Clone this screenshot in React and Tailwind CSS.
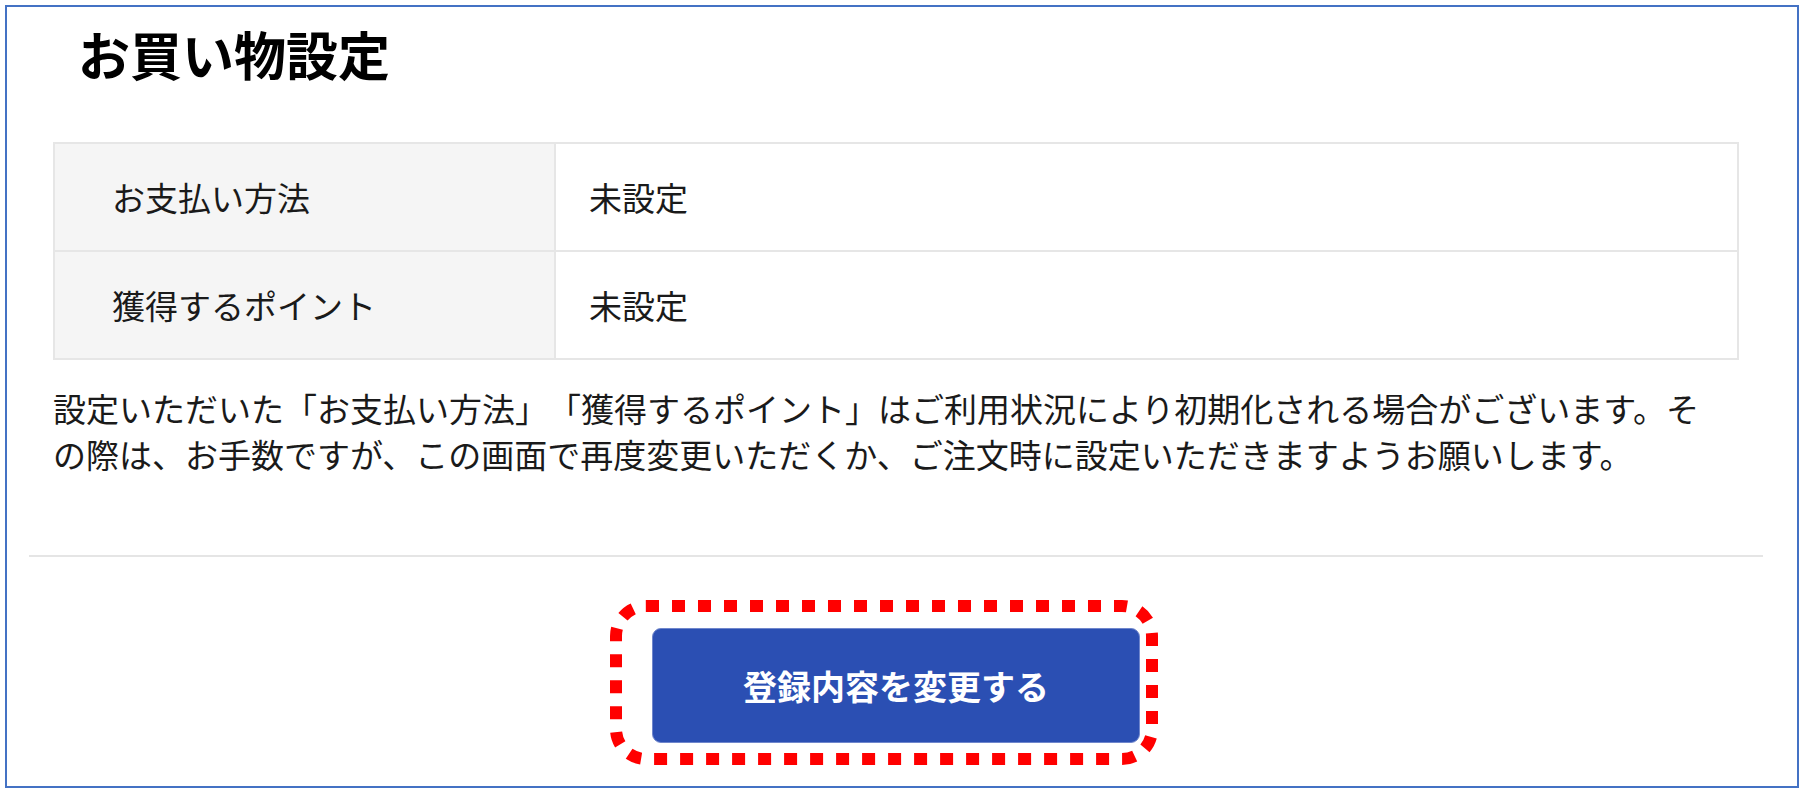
import React from "react";

const rows = [
  { label: "お支払い方法", value: "未設定" },
  { label: "獲得するポイント", value: "未設定" },
];

const App = () => {
  return (
    <div
      className="w-[1805px] h-[795px] bg-white pt-[5px] pl-[5px] [text-spacing-trim:space-all]"
      style={{ fontFamily: '"Noto Sans CJK JP", "Noto Sans", sans-serif' }}
    >
      <div className="w-[1794px] h-[783px] border-2 border-[#4472c4] pl-[46px] pr-[58px] text-[#1a1a1a]">
        {/* title */}
        <h1 className="pt-[21px] pl-[25px] text-[52px] leading-none font-bold text-black">
          お買い物設定
        </h1>

        {/* settings table */}
        <table className="mt-[62px] w-full border-collapse border-2 border-[#e6e6e6]">
          <tbody>
            {rows.map((row) => (
              <tr key={row.label} className="h-[108px]">
                <td className="w-[501px] bg-[#f5f5f5] border-2 border-[#e6e6e6] pl-[57px] text-[33px] leading-none">
                  {row.label}
                </td>
                <td className="border-2 border-[#e6e6e6] pl-[33px] text-[33px] leading-none">
                  {row.value}
                </td>
              </tr>
            ))}
          </tbody>
        </table>

        <p className="mt-[25px] pr-[8px] text-[33px] leading-[46px] [text-spacing-trim:space-all]">
          設定いただいた「お支払い方法」「獲得するポイント」はご利用状況により初期化される場合がございます。その際は、お手数ですが、この画面で再度変更いただくか、ご注文時に設定いただきますようお願いします。
        </p>

        <div className="mt-[78px] -ml-[24px] -mr-[24px] h-[2px] bg-[#e5e5e5]" />

        {/* action */}
        <div className="flex justify-center mt-[71px]">
          <div className="relative">
            <button className="w-[488px] h-[115px] rounded-[9px] bg-[#2b4fb3] border border-[#6f86cc] text-white text-[34px] font-bold leading-none">
              登録内容を変更する
            </button>
            <svg
              className="absolute -left-[42px] -top-[28px] pointer-events-none"
              width="548"
              height="165"
              viewBox="0 0 548 165"
            >
              <rect
                x="6"
                y="6"
                width="536"
                height="153"
                rx="30"
                ry="30"
                fill="none"
                stroke="#ff0000"
                strokeWidth="12"
                strokeDasharray="13 13"
              />
            </svg>
          </div>
        </div>
      </div>
    </div>
  );
};

export default App;
